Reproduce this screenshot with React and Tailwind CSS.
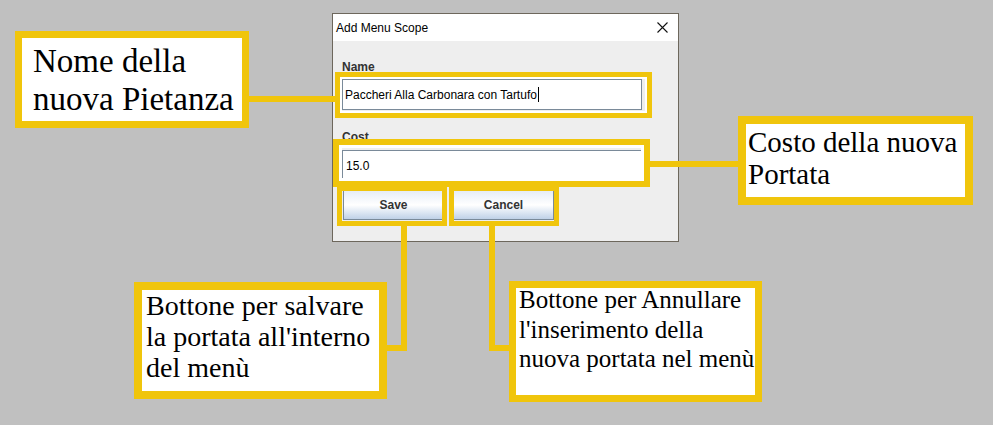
export default function App() {
  const sans = { fontFamily: '"Liberation Sans", Arial, sans-serif' };
  const serif = { fontFamily: '"Liberation Serif", "Times New Roman", serif' };

  return (
    <div className="relative h-[425px] w-[993px] overflow-hidden bg-[#c0c0c0]">
      {/* dialog window */}
      <div
        className="absolute left-[332px] top-[13px] flex h-[229px] w-[347px] flex-col border border-[#6d675c] bg-[#eeeeee]"
        style={sans}
      >
        <div className="flex h-[27px] items-center justify-between bg-white pl-[3px] pr-[10px] text-[12px] text-black">
          <span>Add Menu Scope</span>
          <svg width="11" height="11" viewBox="0 0 11 11">
            <path d="M0.5 0.5 L10.5 10.5 M10.5 0.5 L0.5 10.5" stroke="#111" strokeWidth="1.1" />
          </svg>
        </div>
        <div className="flex flex-col pl-[9px] pt-[18px]">
          <div className="h-[16px] text-[12px] font-bold leading-[16px] text-[#333]">Name</div>
          <div className="mt-[4px] flex h-[31px] w-[300px] items-center border border-[#7a8a99] bg-white pl-[2px] text-[12px] text-black">
            <span>Paccheri Alla Carbonara con Tartufo</span>
            <span className="ml-px h-[15px] w-px bg-black" />
          </div>
          <div className="mt-[19px] h-[16px] text-[12px] font-bold leading-[16px] text-[#333]">Cost</div>
          <div className="mt-[5px] flex h-[31px] w-[300px] items-center border border-[#7a8a99] bg-white pl-[3px] text-[12px] text-black">
            15.0
          </div>
          <div className="ml-px mt-[9px] flex gap-[9px]">
            <button className="flex h-[30px] w-[101px] items-center justify-center border border-[#7a8a99] bg-gradient-to-b from-[#e6edf6] via-white to-[#bfd1e7] text-[12px] font-bold text-[#333]">
              Save
            </button>
            <button className="flex h-[30px] w-[101px] items-center justify-center border border-[#7a8a99] bg-gradient-to-b from-[#e6edf6] via-white to-[#bfd1e7] text-[12px] font-bold text-[#333]">
              Cancel
            </button>
          </div>
        </div>
      </div>

      {/* highlight frames */}
      <div className="absolute left-[335px] top-[72px] h-[46px] w-[317px] border-[5px] border-[#f0c50c] shadow-[inset_0_0_0_2px_white]" />
      <div className="absolute left-[333px] top-[139px] h-[48px] w-[317px] border-[6px] border-[#f0c50c] shadow-[inset_0_0_0_3px_white]" />
      <div className="absolute left-[337px] top-[186px] h-[40px] w-[110px] border-[5px] border-[#f0c50c]" />
      <div className="absolute left-[449px] top-[186px] h-[40px] w-[110px] border-[5px] border-[#f0c50c]" />

      {/* connectors */}
      <div className="absolute left-[249px] top-[96px] h-[6px] w-[87px] bg-[#f0c50c]" />
      <div className="absolute left-[650px] top-[161px] h-[6px] w-[88px] bg-[#f0c50c]" />
      <div className="absolute left-[401px] top-[226px] h-[125px] w-[6px] bg-[#f0c50c]" />
      <div className="absolute left-[387px] top-[345px] h-[6px] w-[20px] bg-[#f0c50c]" />
      <div className="absolute left-[489px] top-[226px] h-[125px] w-[6px] bg-[#f0c50c]" />
      <div className="absolute left-[489px] top-[345px] h-[6px] w-[20px] bg-[#f0c50c]" />

      {/* callouts */}
      <div
        className="absolute left-[15px] top-[31px] h-[97px] w-[234px] border-[7px] border-[#f0c50c] bg-white pl-[11px] pt-[4px] text-[33px] leading-[38px] text-black"
        style={serif}
      >
        Nome della
        <br />
        nuova Pietanza
      </div>
      <div
        className="absolute left-[738px] top-[116px] h-[89px] w-[235px] border-[8px] border-[#f0c50c] bg-white pl-[2px] pt-[2px] text-[29px] leading-[32px] text-black"
        style={serif}
      >
        Costo della nuova
        <br />
        Portata
      </div>
      <div
        className="absolute left-[134px] top-[282px] h-[117px] w-[253px] border-[8px] border-[#f0c50c] bg-white pl-[4px] text-[28px] leading-[31px] text-black"
        style={serif}
      >
        Bottone per salvare
        <br />
        la portata all'interno
        <br />
        del menù
      </div>
      <div
        className="absolute left-[509px] top-[281px] h-[121px] w-[253px] border-[7px] border-[#f0c50c] bg-white pl-[3px] text-[25px] leading-[29.5px] text-black"
        style={serif}
      >
        <div className="-mt-[3px] whitespace-nowrap">
          Bottone per Annullare
          <br />
          l'inserimento della
          <br />
          nuova portata nel menù
        </div>
      </div>
    </div>
  );
}
